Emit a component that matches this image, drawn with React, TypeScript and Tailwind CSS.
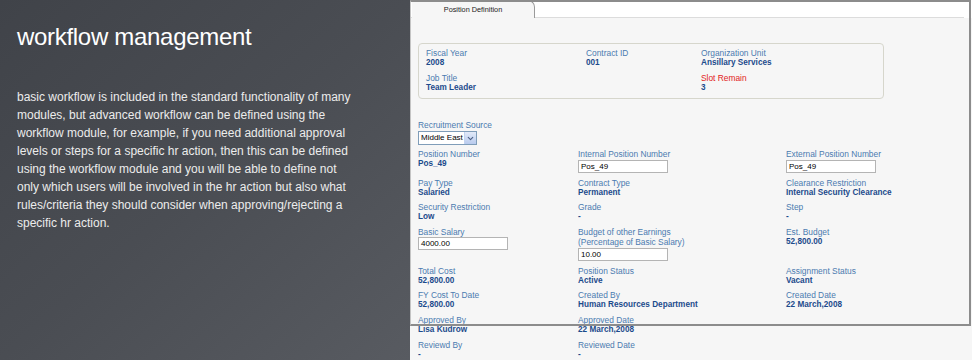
import React from 'react';
import { ChevronDown } from 'lucide-react';

type Field = {
  label: string;
  value?: string;
  input?: string;
  red?: boolean;
};

const Label: React.FC<{ text: string; red?: boolean }> = ({ text, red }) => (
  <div className={red ? 'text-[8.4px] leading-[10px] text-[#e2231a]' : 'text-[8.4px] leading-[10px] text-[#4b7bb0]'}>
    {text}
  </div>
);

const Value: React.FC<{ text: string }> = ({ text }) => (
  <div className="text-[8.2px] leading-[10px] font-bold text-[#1c4b8c]">{text}</div>
);

const TextBox: React.FC<{ text: string; className?: string }> = ({ text, className }) => (
  <div
    className={
      'w-[90px] h-[13px] bg-white border border-[#b4b4b4] pl-[2px] text-[8px] leading-[11px] text-black ' +
      (className ?? '')
    }
  >
    {text}
  </div>
);

const Cell: React.FC<{ field: Field }> = ({ field }) => (
  <div>
    <Label text={field.label} red={field.red} />
    {field.input !== undefined ? <TextBox text={field.input} className="mt-[1.5px] h-[12px]" /> : <Value text={field.value ?? ''} />}
  </div>
);

const plainRows: Field[][] = [
  [
    { label: 'Pay Type', value: 'Salaried' },
    { label: 'Contract Type', value: 'Permanent' },
    { label: 'Clearance Restriction', value: 'Internal Security Clearance' },
  ],
  [
    { label: 'Security Restriction', value: 'Low' },
    { label: 'Grade', value: '-' },
    { label: 'Step', value: '-' },
  ],
];

const lowerRows: Field[][] = [
  [
    { label: 'Total Cost', value: '52,800.00' },
    { label: 'Position Status', value: 'Active' },
    { label: 'Assignment Status', value: 'Vacant' },
  ],
  [
    { label: 'FY Cost To Date', value: '52,800.00' },
    { label: 'Created By', value: 'Human Resources Department' },
    { label: 'Created Date', value: '22 March,2008' },
  ],
  [
    { label: 'Approved By', value: 'Lisa Kudrow' },
    { label: 'Approved Date', value: '22 March,2008' },
  ],
  [
    { label: 'Reviewd By', value: '-' },
    { label: 'Reviewed Date', value: '-' },
  ],
];

const gridCols = 'grid grid-cols-[160px_208px_1fr]';

export default function App() {
  return (
    <div className="flex w-[972px] h-[360px] overflow-hidden font-['Liberation_Sans',Arial,sans-serif]">
      {/* Left copy */}
      <div className="w-[410px] shrink-0 bg-gradient-to-br from-[#404349] via-[#4a4d53] to-[#585b61] px-[17px] pt-[23px]">
        <h1 className="text-[24px] leading-[28px] text-white tracking-[-0.3px]">workflow management</h1>
        <p className="mt-[37px] text-[12px] leading-[18px] text-[#ececec] w-[342px]">
          basic workflow is included in the standard functionality of many modules, but advanced workflow can be
          defined using the workflow module, for example, if you need additional approval levels or steps for a
          specific hr action, then this can be defined using the workflow module and you will be able to define not
          only which users will be involved in the hr action but also what rules/criteria they should consider when
          approving/rejecting a specific hr action.
        </p>
      </div>

      {/* Right form screenshot */}
      <div className="relative flex-1 bg-[#f6f6f6] font-['Liberation_Sans',Arial,sans-serif]">
        {/* Tab strip */}
        <div className="flex h-[18px] bg-white">
          <div className="w-[2px] border-b border-[#dcdcdc]" />
          <div className="w-[123px] h-full bg-[#f6f6f6] border-r border-t border-[#9a9a9a] rounded-tr-[7px] flex items-center justify-center pt-[1px] text-[7.3px] text-[#222]">
            Position Definition
          </div>
          <div className="flex-1 border-b border-[#dcdcdc] mr-[4px]" />
          <div className="w-[4px]" />
        </div>

        <div className="pl-[8px]">
          {/* Summary group */}
          <div className="mt-[25px] w-[466px] h-[56px] rounded-[4px] border border-[#d6d6cc] pl-[7px] pt-[4px]">
            <div className="grid grid-cols-[160px_115px_1fr] gap-y-[4.6px]">
              <Cell field={{ label: 'Fiscal Year', value: '2008' }} />
              <Cell field={{ label: 'Contract ID', value: '001' }} />
              <Cell field={{ label: 'Organization Unit', value: 'Ansillary Services' }} />
              <Cell field={{ label: 'Job Title', value: 'Team Leader' }} />
              <div />
              <Cell field={{ label: 'Slot Remain', value: '3', red: true }} />
            </div>
          </div>

          {/* Recruitment source */}
          <div className="mt-[21px]">
            <Label text="Recruitment Source" />
            <div className="mt-[1px] flex w-[59px] h-[14px] bg-white border border-[#7f9db9]">
              <div className="flex-1 pl-[2px] text-[8px] leading-[12px] text-black whitespace-nowrap overflow-hidden">Middle East</div>
              <div className="w-[12px] h-full shrink-0 bg-gradient-to-b from-[#e2eaf8] to-[#b9cbee] border-l border-[#c3d3f0] flex items-center justify-center">
                <ChevronDown size={9} strokeWidth={3} className="text-[#4d6185]" />
              </div>
            </div>
          </div>

          {/* Main fields */}
          <div className={gridCols + ' mt-[3.5px] gap-y-[4.7px]'}>
            <Cell field={{ label: 'Position Number', value: 'Pos_49' }} />
            <Cell field={{ label: 'Internal Position Number', input: 'Pos_49' }} />
            <Cell field={{ label: 'External Position Number', input: 'Pos_49' }} />

            {plainRows.map((row) => row.map((f) => <Cell key={f.label} field={f} />))}

            <div>
              <Label text="Basic Salary" />
              <TextBox text="4000.00" />
            </div>
            <div>
              <Label text="Budget of other Earnings" />
              <Label text="(Percentage of Basic Salary)" />
              <TextBox text="10.00" className="mt-[1px]" />
            </div>
            <Cell field={{ label: 'Est. Budget', value: '52,800.00' }} />

            {lowerRows.map((row, i) => (
              <React.Fragment key={i}>
                {row.map((f) => (
                  <Cell key={f.label} field={f} />
                ))}
                {row.length < 3 && <div />}
              </React.Fragment>
            ))}
          </div>
        </div>

        {/* Frame drawn over the captured form */}
        <div className="pointer-events-none absolute left-0 top-0 right-[1px] h-[326px] border-2 border-l border-[#8c8c8c] border-l-[#c4c4c4]" />
      </div>
    </div>
  );
}
